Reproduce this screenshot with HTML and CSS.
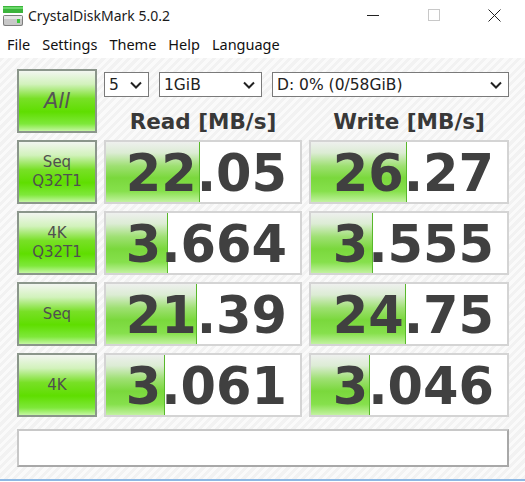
FILE: index.html
```html
<!DOCTYPE html>
<html>
<head>
<meta charset="utf-8">
<link rel="stylesheet" href="styles.css">
</head>
<body>
<div class="window">
  <div class="titlebar">
    <svg class="app-icon" width="22" height="22" viewBox="0 0 22 22">
      <rect x="1" y="1" width="20" height="7" fill="#3cb43c"/>
      <rect x="1" y="2" width="20" height="2" fill="#6ad86a"/>
      <rect x="1" y="10" width="20" height="11" rx="2" fill="#7d7d7d"/>
      <rect x="2" y="11" width="18" height="9" rx="1.5" fill="#c8c8c8"/>
      <rect x="2" y="11" width="18" height="3" fill="#e6e6e6"/>
      <rect x="15" y="14" width="3" height="4" fill="#3cc83c"/>
    </svg>
    <span class="title">CrystalDiskMark 5.0.2</span>
    <div class="controls">
      <span class="ctl"><svg width="12" height="12" viewBox="0 0 12 12"><line x1="0" y1="6.5" x2="12" y2="6.5" stroke="#222" stroke-width="1"/></svg></span>
      <span class="ctl"><svg width="12" height="12" viewBox="0 0 12 12"><rect x="0.5" y="0.5" width="11" height="11" fill="none" stroke="#c8c8c8" stroke-width="1"/></svg></span>
      <span class="ctl"><svg width="13" height="13" viewBox="0 0 13 13"><path d="M0.5 0.5 L12.5 12.5 M12.5 0.5 L0.5 12.5" stroke="#222" stroke-width="1"/></svg></span>
    </div>
  </div>
  <div class="menubar">
    <span class="menu">File</span>
    <span class="menu">Settings</span>
    <span class="menu">Theme</span>
    <span class="menu">Help</span>
    <span class="menu">Language</span>
  </div>
  <div class="client">
    <div class="top">
      <div class="btn btn-all">All</div>
      <div class="top-right">
        <div class="selects">
          <div class="select s-count"><span>5</span><svg class="chev" width="12" height="8" viewBox="0 0 12 8"><path d="M1 1.5 L6 6.5 L11 1.5" fill="none" stroke="#222" stroke-width="2"/></svg></div>
          <div class="select s-size"><span>1GiB</span><svg class="chev" width="12" height="8" viewBox="0 0 12 8"><path d="M1 1.5 L6 6.5 L11 1.5" fill="none" stroke="#222" stroke-width="2"/></svg></div>
          <div class="select s-drive"><span>D: 0% (0/58GiB)</span><svg class="chev" width="12" height="8" viewBox="0 0 12 8"><path d="M1 1.5 L6 6.5 L11 1.5" fill="none" stroke="#222" stroke-width="2"/></svg></div>
        </div>
        <div class="headers">
          <div class="hdr hdr-read">Read [MB/s]</div>
          <div class="hdr hdr-write">Write [MB/s]</div>
        </div>
      </div>
    </div>
    <div class="grid">
      <div class="btn btn-test"><span>Seq</span><span>Q32T1</span></div>
      <div class="result"><div class="bar" style="width:93px"></div><span class="val">22.05</span></div>
      <div class="result"><div class="bar" style="width:95px"></div><span class="val">26.27</span></div>

      <div class="btn btn-test"><span>4K</span><span>Q32T1</span></div>
      <div class="result"><div class="bar" style="width:61px"></div><span class="val">3.664</span></div>
      <div class="result"><div class="bar" style="width:61px"></div><span class="val">3.555</span></div>

      <div class="btn btn-test"><span>Seq</span></div>
      <div class="result"><div class="bar" style="width:90px"></div><span class="val">21.39</span></div>
      <div class="result"><div class="bar" style="width:94px"></div><span class="val">24.75</span></div>

      <div class="btn btn-test"><span>4K</span></div>
      <div class="result"><div class="bar" style="width:58px"></div><span class="val">3.061</span></div>
      <div class="result"><div class="bar" style="width:58px"></div><span class="val">3.046</span></div>
    </div>
    <div class="comment"></div>
  </div>
</div>
</body>
</html>
```
FILE: styles.css
```css
html, body {
  margin: 0;
  padding: 0;
  background: #ffffff;
}
.window {
  width: 525px;
  height: 482px;
  display: flex;
  flex-direction: column;
  overflow: hidden;
}
.titlebar {
  height: 30px;
  display: flex;
  align-items: center;
  background: #ffffff;
  padding-left: 2px;
}
.app-icon {
  display: block;
  margin-top: 1px;
}
.title {
  margin-left: 4px;
  font-family: "Noto Sans", "Open Sans", sans-serif;
  font-size: 14px;
  color: #1a1a1a;
}
.controls {
  margin-left: auto;
  display: flex;
  align-items: center;
}
.ctl {
  width: 61px;
  height: 30px;
  display: flex;
  align-items: center;
  justify-content: center;
}
.ctl svg { display: block; }
.menubar {
  height: 28px;
  display: flex;
  align-items: center;
  padding-left: 1px;
  background: #ffffff;
  font-family: "Noto Sans", "Open Sans", sans-serif;
  font-size: 14.5px;
  color: #111;
}
.menu {
  padding: 0 6px;
}
.client {
  flex: 1;
  padding: 11px 16px 0 17px;
  background-color: #f6f6f6;
  background-image: repeating-linear-gradient(135deg, #f2f2f2 0px, #f2f2f2 3px, #fafafa 3px, #fafafa 6px);
  border-bottom: 2px solid #8db8e3;
  margin-bottom: 1px;
  display: flex;
  flex-direction: column;
}
.top {
  display: flex;
  gap: 7px;
}
.btn {
  box-sizing: border-box;
  border: 2px solid #8b968b;
  background: linear-gradient(to bottom, #f2f6f0 0%, #d2f2bc 22%, #78e026 46%, #5fde00 68%, #7ee83a 88%, #c4f6a2 100%);
  color: #505050;
  font-family: "DejaVu Sans", sans-serif;
  display: flex;
  flex-direction: column;
  align-items: center;
  justify-content: center;
}
.btn-all {
  width: 80px;
  height: 64px;
  font-size: 21px;
  font-style: italic;
  color: #555;
}
.top-right {
  display: flex;
  flex-direction: column;
}
.selects {
  display: flex;
  gap: 10px;
  margin-top: 3px;
}
.select {
  box-sizing: border-box;
  height: 25px;
  border: 1px solid #7a7a7a;
  background: #ffffff;
  display: flex;
  align-items: center;
  justify-content: space-between;
  padding: 0 6px 0 4px;
  font-family: "DejaVu Sans", sans-serif;
  font-size: 15.5px;
  color: #222;
}
.s-count { width: 45px; }
.s-size { width: 103px; }
.s-drive { width: 237px; }
.chev { display: block; }
.headers {
  box-sizing: border-box;
  display: flex;
  gap: 7px;
  height: 36px;
  align-items: flex-start;
  padding-top: 13px;
}
.hdr {
  font-family: "DejaVu Sans", sans-serif;
  font-weight: bold;
  font-size: 21.5px;
  line-height: 24px;
  color: #383838;
  text-align: center;
}
.hdr-read { width: 198px; }
.hdr-write { width: 200px; }
.grid {
  display: grid;
  grid-template-columns: 80px 198px 200px;
  grid-auto-rows: 64px;
  gap: 7px;
  margin-top: 7px;
}
.btn-test {
  font-size: 15px;
  line-height: 19px;
}
.result {
  position: relative;
  box-sizing: border-box;
  border: 2px solid #d4d4d4;
  background: #ffffff;
  display: flex;
  align-items: center;
  justify-content: flex-end;
  padding-right: 13px;
  padding-top: 2px;
  overflow: hidden;
}
.bar {
  position: absolute;
  left: 0;
  top: 0;
  bottom: 0;
  border-right: 1px solid #58b82a;
  background: linear-gradient(to bottom, #eef0ee 0%, #dcecd4 18%, #9ee072 40%, #7ad83c 60%, #86e04c 82%, #c2f2a0 100%);
}
.val {
  position: relative;
  font-family: "DejaVu Sans", sans-serif;
  font-weight: bold;
  font-size: 51px;
  line-height: 1;
  color: #404040;
}
.comment {
  box-sizing: border-box;
  width: 492px;
  height: 38px;
  margin-top: 12px;
  border: 2px solid #c8c8c8;
  border-right-color: #a8a8a8;
  border-bottom-color: #a8a8a8;
  background: #ffffff;
}
```
